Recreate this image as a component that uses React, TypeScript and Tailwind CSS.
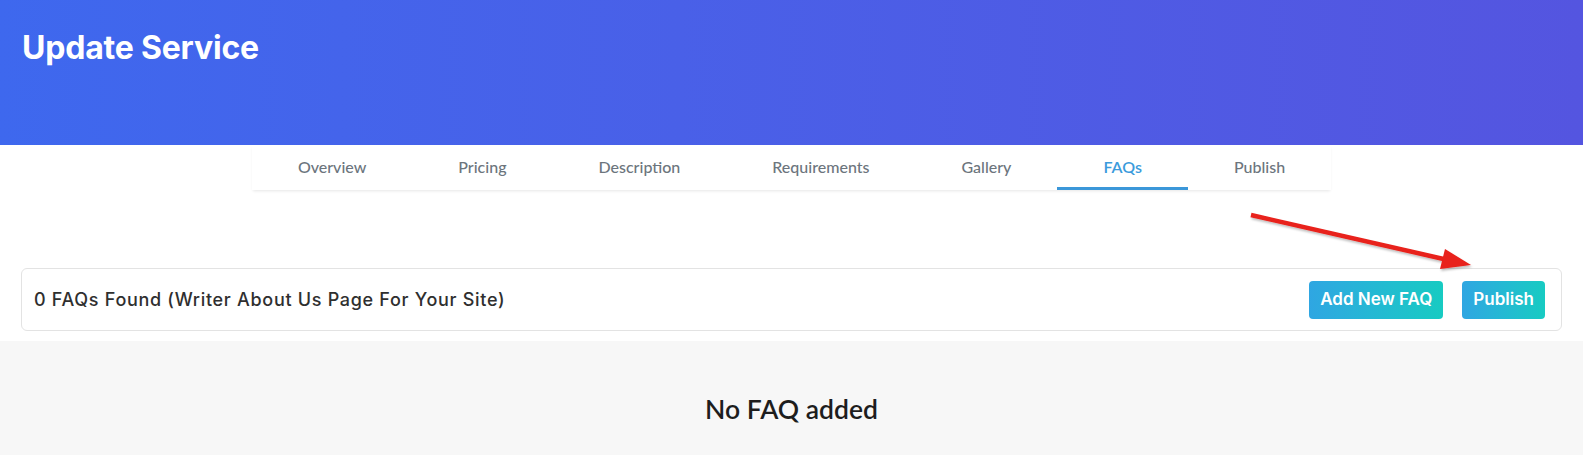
const tabs = ["Overview", "Pricing", "Description", "Requirements", "Gallery", "FAQs", "Publish"];

function Arrow() {
  return (
    <svg className="pointer-events-none absolute left-[1236px] top-[205px]" width="250" height="80" viewBox="0 0 250 80">
      <defs>
        <filter id="sh" x="-10%" y="-10%" width="130%" height="140%">
          <feDropShadow dx="1" dy="2" stdDeviation="1.2" floodColor="#000" floodOpacity="0.25" />
        </filter>
      </defs>
      <g filter="url(#sh)">
        <line x1="15" y1="10" x2="212" y2="55" stroke="#e8201a" strokeWidth="4.5" strokeLinecap="butt" />
        <polygon points="235,60 209,44 204,64" fill="#e8201a" />
      </g>
    </svg>
  );
}

export default function App() {
  return (
    <div className="relative min-h-[455px] bg-white">
      <header className="h-[145px] bg-gradient-to-r from-[#3e68ee] to-[#5455e0] px-[22px] pt-[28px]">
        <h1 className="text-[32px] font-bold leading-[40px] tracking-[-0.2px] text-white" style={{ fontFamily: "Inter, sans-serif" }}>
          Update Service
        </h1>
      </header>

      <nav className="flex justify-center">
        <div className="flex h-[45px] shadow-[0_2px_3px_-1px_rgba(0,0,0,0.1)]" style={{ fontFamily: "Lato, sans-serif" }}>
          {tabs.map((t) => (
            <div
              key={t}
              className={
                "flex items-center border-b-[3px] px-[46px] pt-[2px] text-[16px] " +
                (t === "FAQs" ? "border-[#3b97d9] font-semibold text-[#3b9bdc]" : "border-transparent font-medium text-[#6c757d]")
              }
            >
              {t}
            </div>
          ))}
        </div>
      </nav>

      <section className="px-[21px] pt-[78px] pb-[10px]">
        <div className="flex h-[63px] items-center justify-between rounded-[6px] border border-[#e3e3e3] pl-[12px] pr-[16px]" style={{ fontFamily: "Inter, sans-serif" }}>
          <span className="text-[18px] font-medium tracking-[0.7px] text-[#2f2f2f]">0 FAQs Found (Writer About Us Page For Your Site)</span>
          <div className="flex gap-[19px]">
            <button className="h-[38px] rounded-[4px] bg-gradient-to-r from-[#2fa6e2] to-[#17cbc2] px-[11px] text-[17px] font-semibold text-white">
              Add New FAQ
            </button>
            <button className="h-[38px] rounded-[4px] bg-gradient-to-r from-[#2fa6e2] to-[#17cbc2] px-[11px] text-[17px] font-semibold text-white">
              Publish
            </button>
          </div>
        </div>
      </section>

      <section className="flex h-[115px] justify-center bg-[#f7f7f7] pt-[50px]">
        <p className="text-[26.5px] font-semibold leading-[36px] text-[#1d1d1d]" style={{ fontFamily: "Lato, sans-serif" }}>
          No FAQ added
        </p>
      </section>

      <Arrow />
    </div>
  );
}
